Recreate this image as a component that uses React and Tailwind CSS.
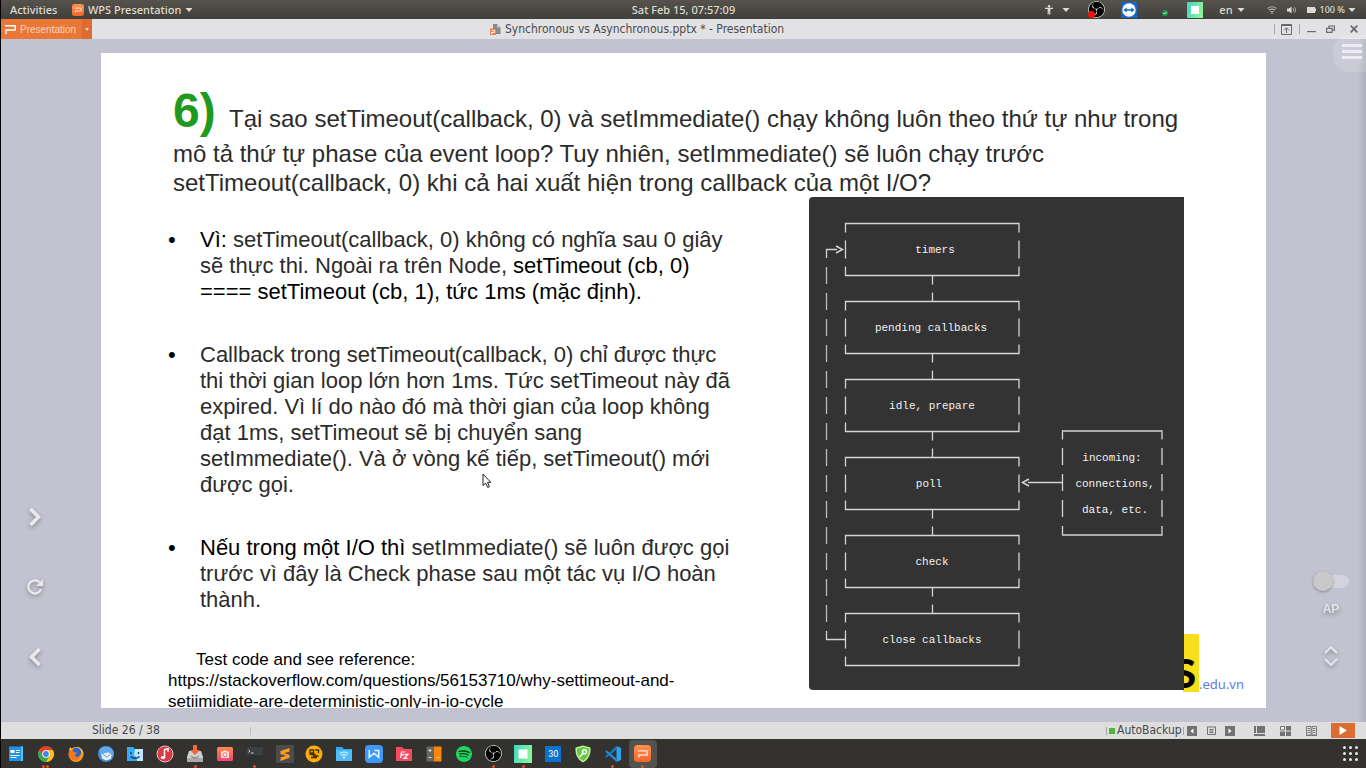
import React from "react";
import { SiSpotify, SiObsstudio } from "react-icons/si";

const Caret = ({ className = "" }) => (
  <svg className={"h-1 w-2 " + className} viewBox="0 0 8 4" fill="currentColor" aria-hidden="true">
    <path d="M0.5 0h7L4 4z" />
  </svg>
);

const WpsIcon = ({ className = "" }) => (
  <svg className={className} viewBox="0 0 18 18" aria-hidden="true">
    <defs>
      <linearGradient id="wps" x1="0" y1="0" x2="0" y2="1">
        <stop offset="0" stopColor="#ff9150" />
        <stop offset="1" stopColor="#f7662b" />
      </linearGradient>
    </defs>
    <rect width="18" height="18" rx="4" fill="url(#wps)" />
    <path d="M4 6.200h9.800v4.300H5.200v2.700" fill="none" stroke="#ffe6d6" strokeWidth="1.500" />
  </svg>
);

const ObsIcon = ({ className = "", recording }) => (
  <span className={"relative flex items-center justify-center rounded-full bg-black text-[#dcdcdc] " + className}>
    <SiObsstudio className="size-full" />
    {recording && <span className="absolute bottom-0 left-0 size-[7px] rounded-full bg-[#f5100c]" />}
  </span>
);

const GreenSquare = ({ className = "" }) => (
  <svg className={className} viewBox="0 0 18 18" aria-hidden="true">
    <defs>
      <linearGradient id="gsq" x1="0" y1="0" x2="1" y2="0.3">
        <stop offset="0" stopColor="#3fd6c4" />
        <stop offset="1" stopColor="#8af29a" />
      </linearGradient>
    </defs>
    <rect width="18" height="18" fill="url(#gsq)" />
    <rect x="4.5" y="4.5" width="9" height="9" fill="#fff" />
  </svg>
);

function TopBar() {
  return (
    <header className="grid h-[19px] shrink-0 grid-cols-[1fr_auto_1fr] items-center bg-linear-to-b from-[#56534c] to-[#403f3b] font-['Noto_Sans',sans-serif] text-[11px] font-medium leading-[19px] text-[#dfdbd2]">
      <nav className="flex items-center">
        <button type="button" className="ml-[9px] w-[50px] text-left">Activities</button>
        <button type="button" className="ml-3 flex items-center">
          <WpsIcon className="mr-1 size-3" />
          WPS Presentation
          <Caret className="ml-1" />
        </button>
      </nav>
      <time>Sat Feb 15, 07:57:09</time>
      <div className="flex items-center justify-end pr-[10px]">
        <button type="button" aria-label="Accessibility" className="flex items-center gap-2">
          <svg className="size-[10px]" viewBox="0 0 10 10" fill="none" stroke="currentColor" aria-hidden="true">
            <circle cx="5" cy="1.2" r="1.2" fill="currentColor" stroke="none" />
            <path d="M1 3.4h8M5 3v3.5M4.2 3.5v6M5.8 3.5v6" strokeWidth="1.1" />
          </svg>
          <Caret />
        </button>
        <ObsIcon className="ml-[18px] size-[17px]" recording />
        <svg className="ml-4 size-4" viewBox="0 0 16 16" aria-hidden="true">
          <rect width="16" height="16" fill="#1668c8" />
          <circle cx="8" cy="8" r="6.700" fill="#fff" />
          <path d="M2.300 8l3.400-2.600v1.800h4.600V5.400L13.700 8l-3.400 2.600V8.800H5.700v1.800z" fill="#1668c8" />
        </svg>
        <svg className="ml-[25px] mt-1.5 size-[6px]" viewBox="0 0 6 6" aria-hidden="true">
          <circle cx="3" cy="3" r="3" fill="#219653" />
          <path d="M1.500 3l1 1 2-2" stroke="#d6f5e0" fill="none" />
        </svg>
        <GreenSquare className="ml-[19px] size-4" />
        <button type="button" className="ml-4 flex items-center gap-1">
          en
          <Caret />
        </button>
        <button type="button" aria-label="System menu" className="ml-[22px] flex items-center">
          <svg className="w-[10px] text-[#a9a69f]" viewBox="0 0 10 8" fill="none" stroke="currentColor" strokeWidth="1.100" aria-hidden="true">
            <path d="M0.500 2.500q4.500-3.500 9 0M2 4.300q3-2.300 6 0M3.500 6q1.500-1.200 3 0" />
            <circle cx="5" cy="7.200" r="0.800" fill="currentColor" stroke="none" />
          </svg>
          <svg className="ml-[10px] w-[10px]" viewBox="0 0 10 8" aria-hidden="true">
            <path d="M0 2.500h2L4.500 0.500v7L2 5.500H0z" fill="currentColor" />
            <path d="M6 2.300q1.200 1.700 0 3.400M7.600 1.200q2 2.800 0 5.600" fill="none" stroke="#a9a69f" />
          </svg>
          <svg className="ml-[10px] w-[9px]" viewBox="0 0 9 6" aria-hidden="true">
            <path d="M0 0h8v1.500h1v3H8V6H0z" fill="currentColor" />
          </svg>
          <span className="ml-1 whitespace-nowrap text-[9px]">100 %</span>
          <Caret className="ml-[3px]" />
        </button>
      </div>
    </header>
  );
}

function TitleBar() {
  return (
    <div className="flex h-5 shrink-0 items-center bg-[#e2e2e4] text-[#4a4a4c]">
      <button type="button" className="flex h-full w-[91px] items-center bg-[#e97738] font-['Liberation_Sans',sans-serif] text-[10px] text-[#fdd3b4]">
        <svg className="ml-1 w-[11px]" viewBox="0 0 11 9" fill="none" stroke="#fff" strokeWidth="1.400" aria-hidden="true">
          <path d="M0 0.700h10.200v4.300H1V9" />
        </svg>
        <span className="ml-1 flex-1 text-left">Presentation</span>
        <span className="flex h-full w-[10px] items-center justify-center bg-[#dd6c31]">
          <svg className="w-1" viewBox="0 0 4 3" aria-hidden="true"><path d="M0 0h4L2 3z" fill="#fbd5ba" /></svg>
        </span>
      </button>
      <h1 className="flex flex-1 items-center justify-center gap-1 whitespace-nowrap font-['DejaVu_Sans_Condensed','Noto_Sans',sans-serif] text-[12px]">
        <svg className="size-[11px]" viewBox="0 0 11 11" aria-hidden="true">
          <path d="M3 0h4l3.500 3.500V10H3z" fill="#8a8a8e" />
          <path d="M7 0v3.500h3.500" fill="#c9c9cc" />
          <rect x="0" y="4.500" width="6" height="6.500" fill="#ef7f48" />
          <path d="M1.500 6.500h3v2h-3v1.500" fill="none" stroke="#fff" strokeWidth="0.900" />
        </svg>
        Synchronous vs Asynchronous.pptx * - Presentation
      </h1>
      <div className="flex w-[184px] items-center justify-end pr-2 text-[#6a6a6c]">
        <span className="h-[10px] w-px bg-[#a5a5a8]" />
        <button type="button" aria-label="Collapse ribbon" className="ml-1.5">
          <svg className="block w-[11px]" viewBox="0 0 11 11" fill="none" stroke="currentColor" aria-hidden="true">
            <path d="M0.500 0.500h10v10h-10zM0 1.500h11M5.500 9V4M3 6.300L5.500 3.800 8 6.300" />
          </svg>
        </button>
        <span className="ml-[7px] h-[10px] w-px bg-[#a5a5a8]" />
        <button type="button" aria-label="Minimize" className="ml-[7px]">
          <svg className="block w-[9px]" viewBox="0 0 9 9" aria-hidden="true"><path d="M0 6h9v1.200H0z" fill="currentColor" /></svg>
        </button>
        <button type="button" aria-label="Restore" className="ml-[10px]">
          <svg className="block w-[9px]" viewBox="0 0 9 9" fill="none" stroke="currentColor" strokeWidth="1.200" aria-hidden="true">
            <path d="M0.600 3.400h5.400v4H0.600zM3 3V1h5.400v4.200H6.500" />
          </svg>
        </button>
        <button type="button" aria-label="Close" className="ml-[15px]">
          <svg className="block w-2" viewBox="0 0 8 8" fill="none" stroke="currentColor" strokeWidth="1.700" aria-hidden="true">
            <path d="M0.700 0.700l6.600 6.600M7.300 0.700L0.700 7.300" />
          </svg>
        </button>
      </div>
    </div>
  );
}

const PHASES = [
  { label: "timers", x: 126 },
  { label: "pending callbacks", x: 122 },
  { label: "idle, prepare", x: 123 },
  { label: "poll", x: 120 },
  { label: "check", x: 123 },
  { label: "close callbacks", x: 123 },
];
const RAIL = Array.from({ length: 14 }, (_, i) => 78 + i * 26);

function EventLoopDiagram() {
  return (
    <svg
      className="relative z-10 block h-[493px] w-[375px] shrink-0 rounded-l-sm bg-[#333333]"
      viewBox="0 0 375 493"
      role="img"
      aria-label="Event loop phases"
    >
      <g fill="none" stroke="#d4d4d4" strokeWidth="1.300">
        {PHASES.map((p, i) => {
          const t = 26.5 + i * 78;
          return (
            <g key={p.label}>
              <path d={`M36.500 ${t + 9}V${t}H210V${t + 9}M36.500 ${t + 17}v18M210 ${t + 17}v18M36.500 ${t + 43}v9H210v-9`} />
              {i < 5 && <path d={`M123.500 ${t + 52}v9M123.500 ${t + 69}v9`} />}
            </g>
          );
        })}
        {RAIL.map((y) => <path key={y} d={`M17.500 ${y - 8}v17`} stroke="#b9bcc4" />)}
        <path d="M17.500 61V52.500H28M17.500 434v8.500H36" />
        <path d="M27 49l6.500 3.500L27 56M220 282l-6.500 3.500 6.500 3.500" strokeWidth="1.500" />
        <path d="M219 285.500h34M253.500 242.500v-8.500H353v8.500M253.500 251v17M353 251v17M253.500 277v17M353 277v17M253.500 303v17M353 303v17M253.500 329v9H353v-9" />
      </g>
      <g fill="#f2f2f2" textAnchor="middle" className="font-['Liberation_Mono',monospace] text-[11px]">
        {PHASES.map((p, i) => <text key={p.label} x={p.x} y={56 + i * 78}>{p.label}</text>)}
        <text x="303" y="264">incoming:</text>
        <text x="306" y="290">connections,</text>
        <text x="306" y="316">data, etc.</text>
      </g>
    </svg>
  );
}

const Bullet = ({ children }) => (
  <li className="flex">
    <span className="w-8 shrink-0 text-black" aria-hidden="true">•</span>
    <p>{children}</p>
  </li>
);

function Slide() {
  return (
    <article className="relative min-w-0 flex-1 overflow-hidden bg-white pt-[30px] font-['Liberation_Sans',Arial,sans-serif]">
      <h2 className="ml-[72px] max-w-[1030px] text-[24px] leading-[29px] text-[#2b2b2b]">
        <strong className="text-[48px] leading-[56px] text-[#1f9a1f]">6) </strong>
        Tại sao setTimeout(callback, 0) và setImmediate() chạy không luôn theo thứ tự như trong mô tả thứ tự phase của
        event loop? Tuy nhiên, setImmediate() sẽ luôn chạy trước setTimeout(callback, 0) khi cả hai xuất hiện trong
        callback của một I/O?
      </h2>
      <div className="flex justify-between pl-[67px] pr-[82px]">
        <div className="w-[565px] shrink-0 pt-[30px]">
          <ul className="flex flex-col gap-[37px] text-[22px] leading-[26px] text-[#2b2b2b]">
            <Bullet>
              <span className="text-black">Vì: </span>setTimeout(callback, 0) không có nghĩa sau 0 giây<br />
              sẽ thực thi. Ngoài ra trên Node, <span className="text-black">setTimeout (cb, 0)<br />
              ==== setTimeout (cb, 1), tức 1ms (mặc định).</span>
            </Bullet>
            <Bullet>
              Callback trong setTimeout(callback, 0) chỉ được thực<br />
              thi thời gian loop lớn hơn 1ms. Tức setTimeout này đã<br />
              expired. Vì lí do nào đó mà thời gian của loop không<br />
              đạt 1ms, setTimeout sẽ bị chuyển sang<br />
              setImmediate(). Và ở vòng kế tiếp, setTimeout() mới<br />
              được gọi.
            </Bullet>
            <Bullet>
              <span className="text-black">Nếu trong một I/O thì </span>setImmediate() sẽ luôn được gọi<br />
              trước vì đây là Check phase sau một tác vụ I/O hoàn<br />
              thành.
            </Bullet>
          </ul>
          <p className="mt-9 text-[17px] leading-[21px] text-black">
            <span className="ml-7">Test code and see reference:</span>
            <br />
            <a href="https://stackoverflow.com/questions/56153710">
              https://stackoverflow.com/questions/56153710/why-settimeout-and-<br />
              setiimidiate-are-deterministic-only-in-io-cycle
            </a>
          </p>
        </div>
        <EventLoopDiagram />
      </div>
      <div className="absolute bottom-4 right-[22px] flex items-end">
        <span className="flex h-[58px] w-4 items-end justify-end overflow-hidden bg-[#f7df1e] pr-[3px] font-[Lato,sans-serif] text-[40px] font-black leading-[38px] text-black">
          S
        </span>
        <span className="font-['Noto_Sans',sans-serif] text-[13px] leading-4 text-[#5f7bea]">.edu.vn</span>
      </div>
    </article>
  );
}

const sideButton = "flex size-7 items-center justify-center text-[#e9e9ee] drop-shadow-[0_2px_2px_rgba(0,0,0,0.3)]";

function Workspace() {
  return (
    <main className="relative flex min-h-0 flex-1 bg-[#c2c2d0] py-[14px]">
      <div className="flex w-[100px] shrink-0 flex-col justify-end gap-[42px] pb-[37px] pl-5">
        <button type="button" aria-label="Next slide" className={sideButton}>
          <svg className="w-3" viewBox="0 0 12 20" fill="none" stroke="currentColor" strokeWidth="3.500" aria-hidden="true"><path d="M1.500 2l8 8-8 8" /></svg>
        </button>
        <button type="button" aria-label="Reload" className={sideButton}>
          <svg className="size-4" viewBox="0 0 16 16" fill="none" aria-hidden="true">
            <path d="M14 10A6.500 6.500 0 1 1 12.500 3.300" stroke="currentColor" strokeWidth="2.200" />
            <path d="M16 0v7H9z" fill="currentColor" />
          </svg>
        </button>
        <button type="button" aria-label="Previous slide" className={sideButton}>
          <svg className="w-3" viewBox="0 0 12 20" fill="none" stroke="currentColor" strokeWidth="3.500" aria-hidden="true"><path d="M10.500 2l-8 8 8 8" /></svg>
        </button>
      </div>
      <Slide />
      <div className="flex w-[100px] shrink-0 flex-col justify-end pb-10 pl-[47px]">
        <div className="flex w-9 flex-col items-center">
          <label className="flex flex-col items-center gap-[10px] font-['Liberation_Sans',sans-serif] text-[12px] font-bold leading-4 text-[#e2e2e8]">
            <input
              type="checkbox"
              className="flex h-5 w-9 appearance-none items-center before:relative before:z-10 before:size-5 before:rounded-full before:bg-[#c9c9cc] before:shadow-[0_1px_3px_rgba(0,0,0,0.3)] after:-ml-2 after:h-[13px] after:w-6 after:rounded-r-full after:bg-[#d3d3de]"
            />
            <span className="drop-shadow-[0_2px_2px_rgba(0,0,0,0.3)]">AP</span>
          </label>
          <button type="button" aria-label="Scroll speed" className="mt-[27px] text-[#e6e6ec] drop-shadow-[0_2px_2px_rgba(0,0,0,0.3)]">
            <svg className="block h-6 w-4" viewBox="0 0 16 24" fill="none" stroke="currentColor" strokeWidth="1.800" aria-hidden="true">
              <path d="M2 9l6-6 6 6M2 15l6 6 6-6" />
            </svg>
          </button>
        </div>
      </div>
      <div className="pointer-events-none absolute inset-y-0 right-0 w-2 bg-linear-to-r from-transparent to-[#aeaebb]" />
      <button type="button" aria-label="Open menu" className="absolute -top-1 right-0 flex h-[37px] w-[33px] flex-col items-end justify-center gap-[3px] rounded-l-2xl bg-white/15 pb-1 pr-1">
        <span className="h-[3px] w-5 bg-[#ededf1]" />
        <span className="h-[3px] w-5 bg-[#ededf1]" />
        <span className="h-[3px] w-5 bg-[#ededf1]" />
      </button>
      <svg className="absolute left-[481px] top-[434px] h-[16px] w-[10px]" viewBox="0 0 10 16" aria-hidden="true">
        <path d="M1 1v11.500l2.700-2.400 2 4.400 1.800-.8-2-4.300h3.300z" fill="#fff" stroke="#222" />
      </svg>
    </main>
  );
}

function StatusBar() {
  return (
    <div className="flex h-[17px] shrink-0 items-center bg-[#dededf] font-['DejaVu_Sans_Condensed','Noto_Sans',sans-serif] text-[12px] leading-[17px] text-[#484848]">
      <span className="ml-[91px] w-[158px] whitespace-nowrap">Slide 26 / 38</span>
      <span className="h-2 w-px bg-[#bdbdbf]" />
      <div className="ml-auto flex h-full items-center pr-[11px] text-[#727274]">
        <span className="h-2 w-px bg-[#a5a5a8]" />
        <span className="ml-0.5 size-[6px] bg-[#4fb53c]" />
        <button type="button" className="ml-0.5 w-[66px] text-left text-[#484848]">AutoBackup</button>
        <span className="h-2 w-px bg-[#a5a5a8]" />
        <button type="button" aria-label="Previous" className="ml-[3px]">
          <svg className="block size-[10px]" viewBox="0 0 10 10" aria-hidden="true"><path d="M0 0h10v10H0z" fill="currentColor" /><path d="M6.500 2.500v5L3.500 5z" fill="#fff" /></svg>
        </button>
        <button type="button" aria-label="Notes" className="ml-[10px]">
          <svg className="block size-[9px]" viewBox="0 0 9 9" fill="none" stroke="currentColor" aria-hidden="true"><path d="M0 1h9M.5 1v7.500h8V1M2.500 3.500h4M2.500 5h4M2.500 6.500h4" /></svg>
        </button>
        <button type="button" aria-label="Next" className="ml-[9px]">
          <svg className="block size-[10px]" viewBox="0 0 10 10" aria-hidden="true"><path d="M0 0h10v10H0z" fill="currentColor" /><path d="M3.500 2.500v5L6.500 5z" fill="#fff" /></svg>
        </button>
        <button type="button" aria-label="Normal view" className="ml-[19px]">
          <svg className="block w-[11px]" viewBox="0 0 11 10" fill="currentColor" aria-hidden="true"><path d="M0 0h2v7H0zM3 0h8v7H3zM0 8h11v2H0z" /></svg>
        </button>
        <button type="button" aria-label="Slide sorter" className="ml-[15px]">
          <svg className="block w-[11px]" viewBox="0 0 11 10" fill="currentColor" aria-hidden="true"><path d="M6 0h5v4.500H6zM0 5.500h5V10H0zM6 5.500h5V10H6z" /><path d="M.5.500h4v3.500h-4z" fill="#eee" stroke="currentColor" /></svg>
        </button>
        <button type="button" aria-label="Reading view" className="ml-[15px]">
          <svg className="block w-[11px]" viewBox="0 0 11 10" fill="none" stroke="currentColor" strokeWidth="0.900" aria-hidden="true"><path d="M.5.500h4.500v8.500H.5zM6 .5h4.500V9H6zM1.500 2.500h2.500M1.500 4.500h2.500M1.500 6.500h2.500M7 2.500h2.500M7 4.500h2.500M7 6.500h2.500M0 9.500h11" /></svg>
        </button>
        <button type="button" aria-label="Start slide show" className="ml-[14px] flex h-[15px] w-6 items-center justify-center bg-[#dc6c30]">
          <svg className="w-2" viewBox="0 0 8 9" aria-hidden="true"><path d="M0.500 0L8 4.500 0.500 9z" fill="#fff" /></svg>
        </button>
      </div>
    </div>
  );
}

const Ico = ({ children }) => <svg className="size-[18px]" viewBox="0 0 18 18" aria-hidden="true">{children}</svg>;

const APPS = [
  { name: "News", icon: <Ico><path d="M2 1.500h14V16H2z" fill="#1b93ea" /><path d="M14 1.500h2V16h-2z" fill="#53c1fb" /><path d="M3.500 5h4v3h-4zM9 5h4v1H9zM9 7h3.500v1H9zM3.500 10h9v1h-9zM3.500 12h6v1h-6z" fill="#fff" /></Ico> },
  { name: "Chrome", dots: 2, icon: <Ico><circle cx="9" cy="9" r="8" fill="#e5412f" /><path d="M2.070 5A8 8 0 0 0 9 17l4-6H6z" fill="#35a853" /><path d="M9 17A8 8 0 0 0 15.930 5H9l3.500 6z" fill="#fbc116" /><circle cx="9" cy="9" r="3.800" fill="#fff" /><circle cx="9" cy="9" r="2.900" fill="#4285f4" /></Ico> },
  { name: "Firefox", icon: <Ico><circle cx="9" cy="9.500" r="7.500" fill="#ff9a1a" /><path d="M2 5.500L3 2l2.500 2.500zM9 1.800c4 0 7.800 3 7.500 8-.5-2-1.500-3-2.500-3.500z" fill="#ffc62b" /><circle cx="9.500" cy="7.500" r="4.700" fill="#2d63c7" /><path d="M2 6c2-1.500 4-.5 5 1l3 .8c-.5 1.500-2 1.700-2.500 2 .5 2 3 3 6 1.200-1 3-3 4.500-6 4.500-4 0-6-3.500-5.500-9.500z" fill="#f4761c" /></Ico> },
  { name: "Thunderbird", icon: <Ico><circle cx="9" cy="9" r="8" fill="#3d8ddb" /><path d="M4 9l8-2.500 3 1.500-1 6-5 1.500-4-2z" fill="#e4ecf8" /><path d="M2 5c4-5 11-4.500 14 .5 1 3 .8 5-.5 7.500 0-4-2.500-6-6-5.500C7 8 6 9.500 3 9.500z" fill="#5fa8ee" /><path d="M6 9.500l4 2.500 4-3.500" stroke="#7d9bc0" fill="none" /></Ico> },
  { name: "Files", icon: <Ico><path d="M1 2h6l2 2h8v12H1z" fill="#3aa9f3" /><path d="M9 4h8v12h-6l-1-5H8z" fill="#bfe6ff" /><path d="M5 7v2M12.500 7v2M4.500 11.500q4.500 3.500 9 0" stroke="#153a5c" strokeWidth="1.400" fill="none" /></Ico> },
  { name: "Music", icon: <Ico><circle cx="9" cy="9" r="8" fill="#d93a44" stroke="#f2b9bc" strokeWidth="1" /><path d="M8.500 12.500V4.500l3.500-.8v3" fill="none" stroke="#fff" strokeWidth="1.500" /><ellipse cx="7" cy="12.600" rx="2.200" ry="1.700" fill="#fff" /></Ico> },
  { name: "Installer", dots: 1, icon: <Ico><path d="M3 6h12l2 6v5H1v-5z" fill="#cfcfcf" /><path d="M1 13h16v4H1z" fill="#a9a9a9" /><path d="M5 11q4 4 8 0" stroke="#777" fill="none" /><path d="M7 0h4v5h3l-5 5-5-5h3z" fill="#f0693c" /></Ico> },
  { name: "Camera", icon: <Ico><defs><linearGradient id="cam" x1="0" y1="0" x2="0" y2="1"><stop offset="0" stopColor="#fb8a50" /><stop offset="1" stopColor="#f74370" /></linearGradient></defs><rect x="1" y="2" width="16" height="14" rx="1.500" fill="url(#cam)" /><path d="M5 6.500h2l.7-1h2.600l.7 1h2V13H5z" fill="#ffe2dc" /><circle cx="9" cy="9.700" r="2" fill="#fff" stroke="#f8605f" /></Ico> },
  { name: "Terminal", dots: 1, icon: <Ico><rect x="1" y="2" width="16" height="14" rx="1" fill="#3a3f42" /><path d="M1 10h16v6H1z" fill="#2d3134" /><path d="M2.500 5l1.500 1.200-1.500 1.200M5 8h2.500" stroke="#e1e1e1" fill="none" strokeWidth="0.900" /></Ico> },
  { name: "Sublime Text", icon: <Ico><rect width="18" height="18" rx="1" fill="#4c4c4c" /><path d="M4.500 6L13.500 3v3.500L8 8.300l5.500 1.500v3L4.500 16v-3.500l5.500-1.800-5.500-1.700z" fill="#ff9a1f" /></Ico> },
  { name: "Database", icon: <Ico><circle cx="9" cy="9" r="8.500" fill="#fbac0c" /><path d="M5 5h3.500v3H5zM10 5h3.500v3M4.500 9.500h4v3M10 8.500v2.500h3.500M6 12.500h6" stroke="#4b3210" strokeWidth="1.400" fill="none" /></Ico> },
  { name: "Network folder", icon: <Ico><path d="M1 2h6l2 2h8v12H1z" fill="#35a7f2" /><path d="M1 5h16v11H1z" fill="#4fbdfa" /><path d="M5 8.500q4-3 8 0M6.500 10.500q2.500-2 5 0" stroke="#e3f6ff" fill="none" strokeWidth="1.200" /><circle cx="9" cy="12.300" r="1.100" fill="#fff" /></Ico> },
  { name: "WPS Writer", icon: <Ico><rect width="18" height="18" rx="4" fill="#3f97f8" /><path d="M4.300 5v7.300L9 8.200l4.700 4.100V5.500H9.500" fill="none" stroke="#e8f4ff" strokeWidth="1.500" /></Ico> },
  { name: "FileZilla", icon: <Ico><path d="M1 2h6l2 2h8v12H1z" fill="#fb4a5e" /><path d="M10 7H6.500L5.500 13M6 9.800h3M9.500 9.300h3.500l-4 4h3.500" stroke="#fff" fill="none" strokeWidth="1.200" /></Ico> },
  { name: "Calculator", icon: <Ico><path d="M1.500 1.500H9v15H1.500z" fill="#666" /><path d="M9 1.500h7.500v15H9z" fill="#fc8608" /><path d="M3.500 5.500h3M5 4v3M3.500 12.500h3M11.500 12.500h3" stroke="#ddd" /></Ico> },
  { name: "Spotify", icon: <span className="flex size-4 items-center justify-center rounded-full bg-[#15321d] text-[#1fd761]"><SiSpotify className="size-4" /></span> },
  { name: "OBS Studio", dots: 1, icon: <ObsIcon className="size-[17px]" /> },
  { name: "Recorder", dots: 1, icon: <GreenSquare className="size-[18px]" /> },
  { name: "Calendar", icon: <span className="flex size-4 items-center justify-center bg-[#0b72d0] font-['Roboto',sans-serif] text-[9px] leading-4 text-white">30</span> },
  { name: "Security", icon: <Ico><path d="M9 .5l7.500 2c.5 7-2 12-7.500 15C3.500 14.500 1 9.500 1.500 2.500z" fill="#b9f29a" /><path d="M9 2l6 1.600c.2 5.700-1.600 9.700-6 12.200C4.600 13.300 2.800 9.300 3 3.600z" fill="#67c743" /><circle cx="10.500" cy="6.800" r="2" fill="none" stroke="#fff" strokeWidth="1.500" /><path d="M9 8.300L5.500 12" stroke="#fff" strokeWidth="1.600" /></Ico> },
  { name: "Visual Studio Code", dots: 1, icon: <Ico><path d="M12.500 1L17 3v12l-4.500 2z" fill="#2ba3ee" /><path d="M12.500 4.500L2.500 12.800 1 11.500 12.500 1z" fill="#1379bf" /><path d="M12.500 13.500L2.500 5.200 1 6.500 12.500 17z" fill="#1c8cd6" /></Ico> },
  { name: "WPS Presentation", dots: 1, active: true, icon: <WpsIcon className="size-[17px]" /> },
];

function Taskbar() {
  return (
    <footer className="flex h-[29px] shrink-0 items-center justify-between bg-[#33322f] pl-px pr-2">
      <nav className="flex w-[655px] justify-between">
        {APPS.map((app) => (
          <button
            key={app.name}
            type="button"
            aria-label={app.name}
            className={"relative flex size-7 items-center justify-center rounded-sm " + (app.active ? "bg-[#54524e]" : "")}
          >
            {app.icon}
            {app.dots && (
              <span className="absolute inset-x-0 bottom-0 flex justify-center gap-px">
                {Array.from({ length: app.dots }, (_, i) => (
                  <span key={i} className="size-[3px] rounded-full bg-[#d9532e]" />
                ))}
              </span>
            )}
          </button>
        ))}
      </nav>
      <button type="button" aria-label="Show applications" className="grid grid-cols-3 gap-[3px]">
        {Array.from({ length: 9 }, (_, i) => <span key={i} className="size-[3px] rounded-full bg-[#e8e8e8]" />)}
      </button>
    </footer>
  );
}

export default function App() {
  return (
    <div className="flex h-screen flex-col overflow-hidden border-l border-black bg-[#c2c2d0]">
      <TopBar />
      <TitleBar />
      <Workspace />
      <StatusBar />
      <Taskbar />
    </div>
  );
}
